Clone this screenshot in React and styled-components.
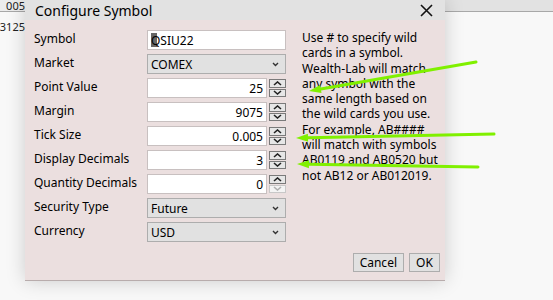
import React from 'react';
import styled, { createGlobalStyle } from 'styled-components';

const GlobalStyle = createGlobalStyle`
  html, body {
    margin: 0;
    padding: 0;
    background: #f8f8f8;
  }
  body {
    font-family: 'Noto Sans', 'Liberation Sans', sans-serif;
    font-size: 12px;
    color: #000;
  }
`;

const Desktop = styled.div`
  position: relative;
  width: 553px;
  height: 300px;
  overflow: hidden;
  background: #f8f8f8;
`;

const BackHeader = styled.div`
  display: flex;
  height: 11px;
  background: #e2e2e2;
  border-bottom: 1px solid #a8a8a8;
`;

const BackCell = styled.div`
  width: 25px;
  display: flex;
  justify-content: flex-end;
  align-items: center;
  overflow: hidden;
  white-space: nowrap;
  font-size: 11px;
  line-height: 11px;
  color: #222;
  background: ${p => (p.head ? '#ececec' : 'transparent')};
  height: ${p => (p.head ? '11px' : '26px')};
  padding-top: ${p => (p.head ? '0' : '2px')};
  box-sizing: border-box;
`;

const BackBody = styled.div`
  background: #f8f8f8;
`;

const Dialog = styled.div`
  position: absolute;
  left: 25px;
  top: 0;
  width: 420px;
  height: 280px;
  display: flex;
  flex-direction: column;
  background: #ebdfdf;
  border-bottom: 1px solid #b8acac;
  box-shadow: 0 0 18px rgba(0, 0, 0, 0.18);
`;

const TitleBar = styled.div`
  height: 20px;
  display: flex;
  align-items: center;
  justify-content: space-between;
  padding: 0 12px 0 10px;
  background: #e2e2e2;
  font-size: 14px;
`;

const Close = styled.svg`
  width: 13px;
  height: 13px;
`;

const Content = styled.div`
  flex: 1;
  display: flex;
  padding: 10px 9px 8px 9px;
  gap: 16px;
  position: relative;
`;

const Form = styled.div`
  display: grid;
  grid-template-columns: 113px 139px;
  grid-auto-rows: 20px;
  row-gap: 4px;
  align-items: center;
`;

const Label = styled.div`
  line-height: 16px;
  margin-top: -2px;
`;

const TextBox = styled.div`
  height: 20px;
  box-sizing: border-box;
  border: 1px solid #c8c0c0;
  background: #fff;
  display: flex;
  align-items: center;
  padding: 0 3px;
  justify-content: ${p => (p.right ? 'flex-end' : 'flex-start')};
`;

const Caret = styled.span`
  display: inline-block;
  width: 6px;
  height: 14px;
  background: #666;
  margin-right: -6px;
`;

const SpinRow = styled.div`
  display: flex;
  gap: 2px;
  height: 20px;
`;

const SpinInput = styled(TextBox)`
  flex: 1;
`;

const Spinner = styled.div`
  width: 17px;
  display: flex;
  flex-direction: column;
  gap: 1px;
  padding: 1px 0;
  box-sizing: border-box;
`;

const SpinBtn = styled.div`
  flex: 1;
  border: 1px solid ${p => (p.disabled ? '#c8c8c8' : '#7a7a7a')};
  background: ${p => (p.disabled ? '#f4f4f4' : '#e6e6e6')};
  display: flex;
  align-items: center;
  justify-content: center;
`;

const Select = styled.div`
  height: 20px;
  box-sizing: border-box;
  border: 1px solid #adadad;
  background: #e1e1e1;
  display: flex;
  align-items: center;
  justify-content: space-between;
  padding: 0 6px 0 3px;
`;

const Help = styled.div`
  line-height: 15.3px;
  white-space: nowrap;
`;

const Footer = styled.div`
  position: absolute;
  right: 5px;
  bottom: 8px;
  display: flex;
  gap: 5px;
`;

const Button = styled.div`
  height: 19px;
  box-sizing: border-box;
  padding: 0 6px;
  border: 1px solid #adadad;
  background: #e1e1e1;
  display: flex;
  align-items: center;
  justify-content: center;
  min-width: ${p => p.w || 0}px;
`;

const Overlay = styled.svg`
  position: absolute;
  left: 0;
  top: 0;
  pointer-events: none;
`;

const Chev = ({ down, disabled }) => (
  <svg width="9" height="5" viewBox="0 0 9 5">
    <path
      d={down ? 'M1 1 L4.5 4 L8 1' : 'M1 4 L4.5 1 L8 4'}
      fill="none"
      stroke={disabled ? '#b0b0b0' : '#222'}
      strokeWidth="1.6"
    />
  </svg>
);

const Spin = ({ value, downDisabled }) => (
  <SpinRow>
    <SpinInput right>{value}</SpinInput>
    <Spinner>
      <SpinBtn>
        <Chev />
      </SpinBtn>
      <SpinBtn disabled={downDisabled}>
        <Chev down disabled={downDisabled} />
      </SpinBtn>
    </Spinner>
  </SpinRow>
);

const Drop = ({ value }) => (
  <Select>
    <span>{value}</span>
    <svg width="7" height="5" viewBox="0 0 7 5">
      <path d="M1 1 L3.5 3.5 L6 1" fill="none" stroke="#333" strokeWidth="1.4" />
    </svg>
  </Select>
);

const helpLines = [
  'Use # to specify wild',
  'cards in a symbol.',
  'Wealth-Lab will match',
  'any symbol with the',
  'same length based on',
  'the wild cards you use.',
  'For example, AB####',
  'will match with symbols',
  'AB0119 and AB0520 but',
  'not AB12 or AB012019.',
];

const arrows = [
  { x1: 476, y1: 62, x2: 309, y2: 91 },
  { x1: 494, y1: 134, x2: 296, y2: 138 },
  { x1: 478, y1: 167, x2: 297, y2: 164 },
];

function Arrow({ x1, y1, x2, y2 }) {
  const a = Math.atan2(y2 - y1, x2 - x1);
  const len = 12;
  const w = 4;
  const bx = x2 - len * Math.cos(a);
  const by = y2 - len * Math.sin(a);
  const px = -Math.sin(a) * w;
  const py = Math.cos(a) * w;
  return (
    <g>
      <line x1={x1} y1={y1} x2={bx} y2={by} stroke="#80f000" strokeWidth="3" strokeLinecap="round" />
      <polygon points={`${x2},${y2} ${bx + px},${by + py} ${bx - px},${by - py}`} fill="#80f000" />
    </g>
  );
}

export default function App() {
  return (
    <Desktop>
      <GlobalStyle />
      <BackHeader>
        <BackCell head>005</BackCell>
      </BackHeader>
      <BackBody>
        <BackCell>03125</BackCell>
      </BackBody>

      <Dialog>
        <TitleBar>
          <span>Configure Symbol</span>
          <Close viewBox="0 0 13 13">
            <path d="M1 1 L12 12 M12 1 L1 12" stroke="#111" strokeWidth="1.6" />
          </Close>
        </TitleBar>
        <Content>
          <Form>
            <Label>Symbol</Label>
            <TextBox>
              <Caret />
              QSIU22
            </TextBox>
            <Label>Market</Label>
            <Drop value="COMEX" />
            <Label>Point Value</Label>
            <Spin value="25" />
            <Label>Margin</Label>
            <Spin value="9075" />
            <Label>Tick Size</Label>
            <Spin value="0.005" />
            <Label>Display Decimals</Label>
            <Spin value="3" />
            <Label>Quantity Decimals</Label>
            <Spin value="0" downDisabled />
            <Label>Security Type</Label>
            <Drop value="Future" />
            <Label>Currency</Label>
            <Drop value="USD" />
          </Form>
          <Help>
            {helpLines.map(l => (
              <div key={l}>{l}</div>
            ))}
          </Help>
          <Footer>
            <Button w={50}>Cancel</Button>
            <Button w={31}>OK</Button>
          </Footer>
        </Content>
      </Dialog>

      <Overlay width="553" height="300">
        {arrows.map((a, i) => (
          <Arrow key={i} {...a} />
        ))}
      </Overlay>
    </Desktop>
  );
}
